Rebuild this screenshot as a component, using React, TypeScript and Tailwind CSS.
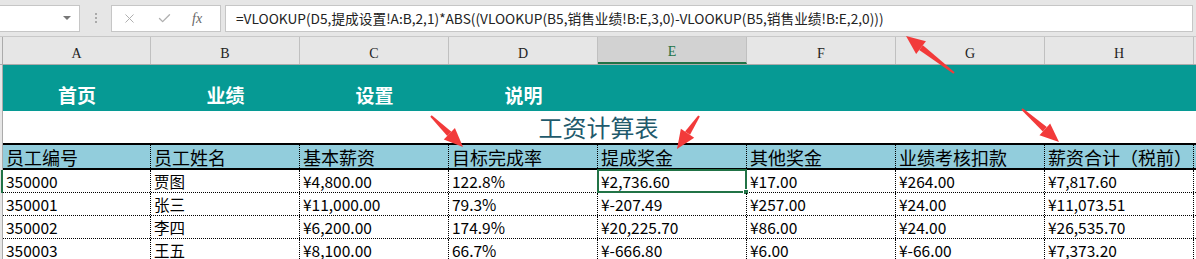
import React from 'react';
import { X, Check } from 'lucide-react';

const cols = ['A', 'B', 'C', 'D', 'E', 'F', 'G', 'H'];
const headers = ['员工编号', '员工姓名', '基本薪资', '目标完成率', '提成奖金', '其他奖金', '业绩考核扣款', '薪资合计（税前）'];
const rows = [
  ['350000', '贾图', '¥4,800.00', '122.8%', '¥2,736.60', '¥17.00', '¥264.00', '¥7,817.60'],
  ['350001', '张三', '¥11,000.00', '79.3%', '¥-207.49', '¥257.00', '¥24.00', '¥11,073.51'],
  ['350002', '李四', '¥6,200.00', '174.9%', '¥20,225.70', '¥86.00', '¥24.00', '¥26,535.70'],
  ['350003', '王五', '¥8,100.00', '66.7%', '¥-666.80', '¥6.00', '¥-66.00', '¥7,373.20'],
];
const nav = ['首页', '业绩', '设置', '说明'];

const font = { fontFamily: '"Noto Sans CJK SC", "Noto Sans", sans-serif' };

const Arrow = ({ x1, y1, x2, y2 }: { x1: number; y1: number; x2: number; y2: number }) => {
  const a = Math.atan2(y2 - y1, x2 - x1);
  const len = 19;
  const w = 8;
  const bx = x2 - Math.cos(a) * len;
  const by = y2 - Math.sin(a) * len;
  const px = -Math.sin(a);
  const py = Math.cos(a);
  // tapered shaft: thin at the tail, wider at the head
  const t = 1;
  const h = 3;
  const shaft = `${x1 + px * t},${y1 + py * t} ${bx + px * h},${by + py * h} ${bx - px * h},${by - py * h} ${x1 - px * t},${y1 - py * t}`;
  return (
    <g>
      <polygon points={shaft} fill="#f23a3a" />
      <polygon points={`${x2},${y2} ${bx + px * w},${by + py * w} ${bx - px * w},${by - py * w}`} fill="#f23a3a" />
    </g>
  );
};

export default function App() {
  return (
    <div className="relative w-[1196px] h-[259px] overflow-hidden bg-white text-black" style={font}>
      {/* formula bar */}
      <div className="h-[37px] bg-[#e6e6e6] flex items-center border-b border-[#c8c8c8]">
        <div className="w-[80px] h-[27px] bg-white border border-[#c6c6c6] border-l-0 flex items-center justify-end pr-[8px]">
          <div className="w-0 h-0 border-l-[4px] border-r-[4px] border-t-[4px] border-l-transparent border-r-transparent border-t-[#777]" />
        </div>
        <div className="w-[31px] flex flex-col items-center gap-[2px]">
          <div className="w-[2px] h-[2px] bg-[#aaa]" />
          <div className="w-[2px] h-[2px] bg-[#aaa]" />
          <div className="w-[2px] h-[2px] bg-[#aaa]" />
        </div>
        <div className="w-[110px] h-[27px] bg-white border border-[#c6c6c6] flex items-center">
          <X className="ml-[10px] text-[#b0b0b0]" size={15} strokeWidth={1.6} />
          <Check className="ml-[20px] text-[#b0b0b0]" size={15} strokeWidth={2.2} />
          <span className="ml-[20px] text-[14px] italic text-[#666]" style={{ fontFamily: '"Liberation Serif", serif' }}>fx</span>
        </div>
        <div className="ml-[4px] w-[968px] h-[27px] bg-white border border-[#c6c6c6] flex items-center pl-[10px] text-[13.7px] text-[#222] whitespace-nowrap">
          =VLOOKUP(D5,提成设置!A:B,2,1)*ABS((VLOOKUP(B5,销售业绩!B:E,3,0)-VLOOKUP(B5,销售业绩!B:E,2,0)))
        </div>
      </div>

      {/* column headers */}
      <div className="flex h-[28px] bg-[#e6e6e6] border-b border-[#ababab]">
        <div className="w-[3px] border-r border-[#ababab]" />
        {cols.map((c, i) => (
          <div
            key={c}
            className={`${i === 0 ? 'w-[148px]' : 'w-[149px]'} flex items-end justify-center pb-[3px] leading-none border-r border-[#c0c0c0] text-[14px] ${c === 'E' ? 'bg-[#d2d2d2] text-[#217346] border-b-2 border-b-[#217346]' : 'text-[#222]'}`}
            style={{ fontFamily: '"Liberation Serif", serif' }}
          >
            {c}
          </div>
        ))}
      </div>

      {/* body */}
      <div className="flex">
        <div className="w-[3px] bg-[#e6e6e6] flex flex-col">
          <div className="h-[105px] border-r border-[#ababab]" />
          <div className="h-[23px] border-r-2 border-[#217346]" />
          <div className="flex-1 border-r border-[#ababab]" />
        </div>
        <div className="flex-1">
          {/* teal nav band */}
          <div className="h-[46px] bg-[#069a94] flex items-end pb-[3px]">
            {nav.map((n, i) => (
              <div key={n} className={`${i === 0 ? 'w-[148px]' : 'w-[149px]'} text-center text-white font-bold text-[19px] leading-[26px]`}>{n}</div>
            ))}
          </div>
          {/* title */}
          <div className="w-[1191px] h-[32px] flex items-center justify-center text-[24px] text-[#1f5a6c]">
            工资计算表
          </div>
          {/* header row */}
          <div className="flex h-[27px] bg-[#92cddc] border-y-2 border-black">
            {headers.map((h, i) => (
              <div
                key={h}
                className={`${i === 0 ? 'w-[148px]' : 'w-[149px]'} shrink-0 flex items-center pl-[3px] text-[18px] leading-none whitespace-nowrap border-r border-dotted border-black`}
              >
                {h}
              </div>
            ))}
          </div>
          {rows.map((r, ri) => (
            <div key={ri} className="flex h-[23px] border-b border-dotted border-black">
              {r.map((v, i) => (
                <div
                  key={i}
                  className={`${i === 0 ? 'w-[148px]' : 'w-[149px]'} shrink-0 pl-[3px] text-[15.5px] leading-[22px] border-r border-dotted border-black relative`}
                >
                  {v}
                  {ri === 0 && i === 4 && (
                    <div className="absolute -left-[1px] -top-[1px] w-[150px] h-[24px] border-2 border-[#217346]">
                      <div className="absolute -right-[4px] -bottom-[4px] w-[6px] h-[6px] bg-[#217346] border border-white" />
                    </div>
                  )}
                </div>
              ))}
            </div>
          ))}
        </div>
      </div>

      {/* annotation arrows */}
      <svg className="absolute inset-0 pointer-events-none" width={1196} height={259}>
        <Arrow x1={954} y1={73} x2={906} y2={36} />
        <Arrow x1={431} y1={116} x2={463} y2={147} />
        <Arrow x1={699} y1={116} x2={677} y2={149} />
        <Arrow x1={1022} y1={109} x2={1059} y2={142} />
      </svg>
    </div>
  );
}
